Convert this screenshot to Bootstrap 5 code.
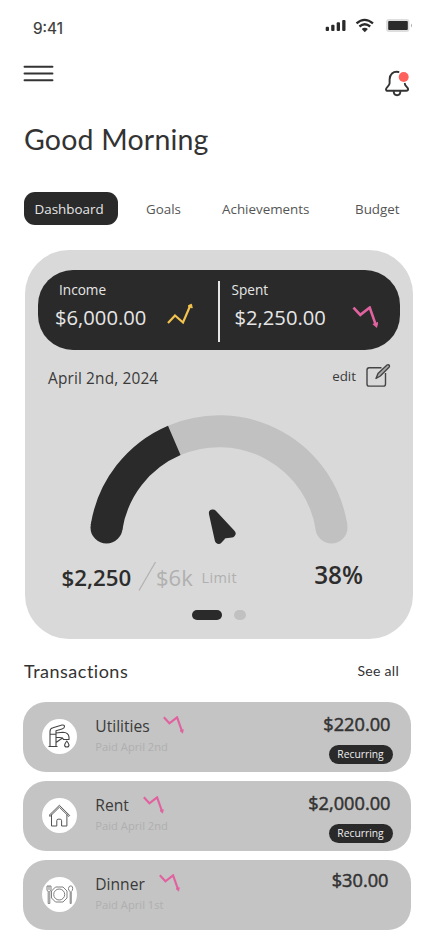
<!DOCTYPE html>
<html lang="en">
<head>
<meta charset="utf-8">
<meta name="viewport" content="width=device-width, initial-scale=1">
<title>Budget dashboard</title>
<link href="https://cdn.jsdelivr.net/npm/bootstrap@5.3.0/dist/css/bootstrap.min.css" rel="stylesheet">
<style>
:root{--ink:#2a2a2a;--panel:#d9d9d9;--tile:#c4c4c4;--muted:#b0b0b0}
body{font-family:"Open Sans","Noto Sans",sans-serif;color:#3a3a3a;background:#fff;line-height:1}
svg{display:block;flex:none;overflow:visible}
.phone{width:438px;height:940px;overflow:hidden}
.status-bar{height:55px;padding:18px 25px 0 33px}
.clock{font:400 15.5px/20px Inter,sans-serif;color:#3c3c3c;padding-top:.6px;-webkit-text-stroke:.2px #3c3c3c}
.top-bar{height:65px;padding:10px 29px 0 24px}
.display-face{font-family:Lato,sans-serif;color:#333}
.greeting{font-size:28.5px;line-height:36px;height:71.5px;padding:1px 0 0 24px;letter-spacing:.2px}
.tabs{height:33.5px;margin-left:24px}
.tabs .nav-link{font-size:13.4px;line-height:34px;padding:0;color:#555}
.tabs .nav-link.active{background:var(--ink);color:#e6e6e6;border-radius:11px;width:94px;height:33.5px;padding-left:10.5px}
.summary{margin:24.5px 25px 0 24.5px;height:389.5px;border-radius:44px;background:var(--panel);padding:20px 13px 0 13.5px}
.totals{height:80px;border-radius:35px;background:var(--ink);color:#e6e6e6;padding-top:11px}
.totals .income{width:180px;padding-left:17px}
.totals .spent{padding-left:12px}
.totals .rule{width:1.5px;height:61px;background:#e6e6e6}
.caption-text{font-size:13.6px;line-height:20px;padding-left:4px;margin-top:-1px}
.sum{font-size:20.2px;line-height:28px;margin-top:3px}
.date-row{height:54px;padding:0 9.500px 0 10px}
.gauge-foot{height:45px;padding:0 37px 0 23.500px}
.fw-mid{font-weight:600;color:#2d2d2d}
.faint{color:var(--muted)}
.pager i{height:10.5px;border-radius:6px;background:var(--ink);width:29.5px}
.pager i+i{background:#c1c1c1;width:12.5px}
.list-head{height:62.5px;padding:20px 39px 0 24px}
.entries{gap:9px;padding:0 27px 0 22.5px}
.entry{height:70px;border-radius:23px;background:var(--tile);padding:0 20.500px 0 19px}
.disc{width:35px;height:35px;border-radius:50%;background:#fff;margin-top:17.500px}
.entry-text{margin:14px 0 0 18.8px}
.entry-name{font-size:15.6px;line-height:20px;color:#3a3a3a}
.entry-note{font-size:11.2px;line-height:16px;color:#afafaf;margin-top:3px}
.amount{font-size:18.2px;line-height:24px;color:#333;font-weight:400;-webkit-text-stroke:.5px #333;margin-top:10px}
.tag{font-size:10.3px;font-weight:500;line-height:19px;height:19px;width:64px;border-radius:10px;background:var(--ink);color:#eee;margin:9.5px -2px 0 0;padding:0}
</style>
</head>
<body>
<svg width="0" height="0" class="position-absolute">
  <symbol id="down" viewBox="0 0 24 21"><path d="M1 1.500 7.500 8.500 16.500 1.500 22.300 18" fill="none" stroke="#e0639f" stroke-width="2.500"/><path d="M20 17.300l4.300-1.500-1.200 4.200z" fill="#e0639f" stroke="#e0639f" stroke-width="1"/></symbol>
</svg>
<div class="phone d-flex flex-column">
  <header class="status-bar d-flex justify-content-between">
    <span class="clock">9:41</span>
    <svg width="88" height="16" viewBox="0 0 88 16">
      <g fill="#2a2a2a"><rect x=".7" y="8.800" width="3.300" height="4.200" rx="1"/><rect x="6.200" y="6.700" width="3.300" height="6.300" rx="1"/><rect x="11.700" y="4.300" width="3.300" height="8.700" rx="1"/><rect x="17.200" y="2" width="3.300" height="11" rx="1"/></g>
      <g fill="none" stroke="#2a2a2a" stroke-width="2.300"><path d="M31.500 5.400q8-7 16.500 0"/><path d="M34.400 8.500q5.400-4.600 10.800 0"/></g>
      <path d="M36.700 11q3-2.400 6.200 0l-3.100 3.300z" fill="#2a2a2a"/>
      <rect x="61" y="1" width="23.500" height="13" rx="3" fill="#dedede"/><rect x="63.200" y="3" width="19.600" height="9" rx="1" fill="#2a2a2a"/><path d="M86 5.500q2 2 0 4z" fill="#aaa"/>
    </svg>
  </header>
  <div class="top-bar d-flex justify-content-between">
    <svg width="29" height="18" viewBox="0 0 29 18" stroke="#333" stroke-width="1.900" stroke-linecap="round"><path d="M.5 1.800h28M.5 8.500h28M.5 15.300h28"/></svg>
    <svg width="24" height="27" viewBox="0 0 24 27" style="margin-top:5px" fill="none" stroke="#333" stroke-width="1.900" stroke-linecap="round" stroke-linejoin="round"><path d="M13.500 2C8 1 4.600 4.500 4.600 9.500v3.800C4.600 16 1 17.500 1 19.200 1 20.200 1.700 20.800 2.800 20.800H21.300c1.100 0 1.800-.7 1.800-1.700 0-1.600-3.300-3.100-3.300-5.600M8.700 21.300c0 5.200 6.700 5.200 6.700 0"/><circle cx="18.700" cy="7" r="6" fill="#fff" stroke="none"/><circle cx="18.700" cy="7" r="5" fill="#ff625c" stroke="none"/></svg>
  </div>
  <h1 class="greeting display-face mb-0 fw-normal">Good Morning</h1>
  <nav class="tabs nav flex-nowrap">
    <a class="nav-link active" href="#">Dashboard</a>
    <a class="nav-link" href="#" style="margin-left:28px;width:76px">Goals</a>
    <a class="nav-link" href="#" style="width:133px">Achievements</a>
    <a class="nav-link" href="#">Budget</a>
  </nav>

  <section class="summary">
    <div class="totals d-flex">
      <div class="income">
        <div class="caption-text">Income</div>
        <div class="sum d-flex">$6,000.00
          <svg width="26" height="22" viewBox="0 0 26 22" class="ms-auto" style="margin-right:25px" fill="none" stroke="#f3c34f" stroke-width="2.200"><path d="M1 20 8 12.500 16 19.500 23.500 2"/><path d="M21 3l3.500-1.800.7 3.800z" fill="#f3c34f" stroke-width="1"/></svg>
        </div>
      </div>
      <div class="rule"></div>
      <div class="spent flex-grow-1">
        <div class="caption-text ps-0">Spent</div>
        <div class="sum d-flex" style="padding-left:3px">$2,250.00
          <svg width="26" height="22" class="ms-auto" style="margin-right:22px;margin-top:3.500px"><use href="#down"/></svg>
        </div>
      </div>
    </div>
    <div class="date-row d-flex justify-content-between">
      <span style="font-size:15.400px;line-height:57px;letter-spacing:.15px">April 2nd, 2024</span>
      <span class="d-flex" style="font-size:13.400px;line-height:53px;gap:9.500px">edit
        <svg width="25" height="25" viewBox="0 0 25 25" style="margin-top:14px" fill="none" stroke="#444" stroke-width="1.400" stroke-linejoin="round"><path d="M15.500 3.700H3.200Q1 3.700 1 5.900v14Q1 22.100 3.200 22.100H17.300Q19.500 22.100 19.500 19.900V9"/><path d="M10 14.500 12 9.500 21 1q1.400-.8 2.300 .3.600 1-.3 2L14.300 12z" fill="#aaa"/></svg>
      </span>
    </div>
    <svg width="362" height="154" viewBox="38 404 362 154">
      <g fill="none" stroke-width="32"><path d="M174.300 440.400A113.800 113.800 0 0 1 331.600 527.500" stroke="#c1c1c1"/><path d="M331.500 527.500h.01" stroke="#c1c1c1" stroke-linecap="round"/><path d="M106.500 527.500A113.800 113.800 0 0 1 174.300 440.400" stroke="#2a2a2a"/><path d="M106.500 527.500h.01" stroke="#2a2a2a" stroke-linecap="round"/></g>
      <path d="M212.900 513.500 231.500 533.500 223.500 534.500 218.700 539.700z" fill="#2a2a2a" stroke="#2a2a2a" stroke-width="8" stroke-linejoin="round"/>
    </svg>
    <div class="gauge-foot d-flex">
      <span class="fw-mid" style="font-size:22.300px;line-height:39px;width:76.500px">$2,250</span>
      <svg width="18" height="30" viewBox="0 0 18 30" stroke="#b3b3b3" stroke-width="1.300" style="margin-top:4px"><path d="M1 28.500 17.500 0"/></svg>
      <span class="faint" style="font-size:22px;line-height:38px;width:45.500px">$6k</span>
      <span class="faint" style="font-size:14.500px;line-height:40px;letter-spacing:.4px">Limit</span>
      <span class="fw-mid ms-auto" style="font-size:24.300px;line-height:34px">38%</span>
    </div>
    <div class="pager d-flex justify-content-center" style="gap:12px;padding-top:7px"><i></i><i></i></div>
  </section>

  <div class="list-head d-flex justify-content-between display-face">
    <h2 class="mb-0 fw-normal" style="font-size:18px;line-height:24px;letter-spacing:.5px">Transactions</h2>
    <a href="#" class="text-decoration-none text-reset" style="font-size:14px;line-height:24px;letter-spacing:.3px">See all</a>
  </div>

  <div class="entries d-flex flex-column">
    <article class="entry d-flex">
      <div class="disc"><svg width="35" height="35" viewBox="0 0 35 35" fill="none" stroke="#444" stroke-width="1.100" stroke-linejoin="round"><path d="M8 27.500V12.500Q8 9.500 11 8.800L20 6q2.500-.3 2.500 1.500T20 10L14 11.800V27.500M6.500 27.500h9M8 15.300h6M14 14l7-.7q5.500.3 6 4.800v2.400h-5.500q-.5-2-3-2L14 18.200M14 23.500 20.500 19M24.800 22q-2.200 2.800-2.200 4a2.200 2 0 0 0 4.400 0q0-1.200-2.200-4z"/></svg></div>
      <div class="entry-text"><div class="entry-name d-flex">Utilities<svg width="20.500" height="18" style="margin-left:13px;margin-top:.5px"><use href="#down"/></svg></div><div class="entry-note">Paid April 2nd</div></div>
      <div class="ms-auto d-flex flex-column align-items-end"><div class="amount">$220.00</div><span class="tag badge">Recurring</span></div>
    </article>
    <article class="entry d-flex">
      <div class="disc"><svg width="35" height="35" viewBox="0 0 35 35" fill="none" stroke="#555" stroke-width="1" stroke-linejoin="round"><path d="M9.500 16.500V28h5.300v-5.300q0-1.500 1.400-1.500h2q1.400 0 1.400 1.500V28h5.300V16.500M7 17.500 17.400 7.300 27.700 17.500l-.9.900-9.400-9.200L8 18.400z"/></svg></div>
      <div class="entry-text"><div class="entry-name d-flex">Rent<svg width="20.500" height="18" style="margin-left:14px;margin-top:1px"><use href="#down"/></svg></div><div class="entry-note">Paid April 2nd</div></div>
      <div class="ms-auto d-flex flex-column align-items-end"><div class="amount">$2,000.00</div><span class="tag badge">Recurring</span></div>
    </article>
    <article class="entry d-flex">
      <div class="disc"><svg width="35" height="35" viewBox="0 0 35 35" fill="none" stroke="#808080" stroke-width="1"><path d="M13.500 10h7.500l4 4v7l-4 4h-7.500l-4-4v-7z" stroke-linejoin="round"/><circle cx="17.200" cy="17.500" r="5.500"/><path d="M5 9v4q0 1 1.200 1v12.500h1.600V14Q9 14 9 13V9zM7 9v4M28.200 26.500V14.500q-2-.8-1.700-3 .4-2.500 1.700-2.500h1q1.500 0 1.500 2.500 0 2.200-1.500 3v12z"/></svg></div>
      <div class="entry-text"><div class="entry-name d-flex">Dinner<svg width="20.500" height="18" style="margin-left:14px;margin-top:.5px"><use href="#down"/></svg></div><div class="entry-note">Paid April 1st</div></div>
      <div class="ms-auto"><div class="amount" style="margin-right:2px;margin-top:8.500px">$30.00</div></div>
    </article>
  </div>
</div>
<script src="https://cdn.jsdelivr.net/npm/bootstrap@5.3.0/dist/js/bootstrap.bundle.min.js"></script>
</body>
</html>
